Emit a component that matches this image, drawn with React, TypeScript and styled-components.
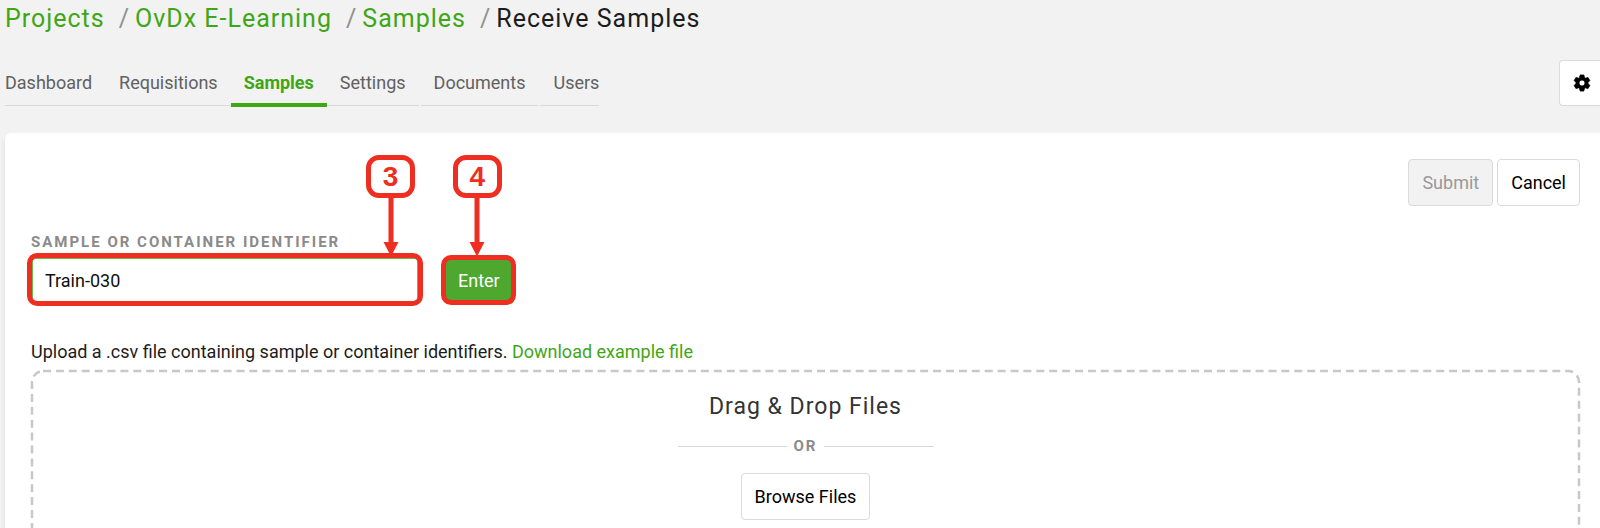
import React, { useState } from "react";
import styled, { createGlobalStyle } from "styled-components";
import { MdSettings } from "react-icons/md";

const green = "#3fa615";
const red = "#ee2e20";

const GlobalStyle = createGlobalStyle`
  *, *::before, *::after { box-sizing: border-box; }
  body {
    margin: 0;
    background: #f2f2f2;
    color: #1c1c1c;
    font-family: Roboto, "Liberation Sans", sans-serif;
    font-size: 18px;
    line-height: 24px;
  }
  button, input { font: inherit; }
  a { color: ${green}; text-decoration: none; }
`;

const Page = styled.div`
  display: flex;
  flex-direction: column;
  height: 100vh;
  overflow: hidden;
  padding-left: 5px;
`;

const Breadcrumb = styled.nav`
  display: flex;
  font-size: 25px;
  line-height: 38px;
  letter-spacing: 1px;
  white-space: nowrap;
`;

const Separator = styled.span`
  color: #909090;
  margin: 0 5px 0 14px;
`;

const HeaderRow = styled.div`
  display: flex;
  align-items: flex-start;
  justify-content: space-between;
  margin: 22px 0 26px;
`;

const Tabs = styled.nav`
  display: flex;
  padding-top: 11px;
`;

const Tab = styled.a<{ $active?: boolean; $spaced?: boolean }>`
  height: 35px;
  padding: 0 13px;
  margin-left: ${(p) => (p.$spaced ? 2 : 0)}px;
  color: ${(p) => (p.$active ? green : "#616161")};
  font-weight: ${(p) => (p.$active ? 700 : 400)};
  border-bottom: 1px solid #d9d9d9;
  ${(p) => p.$active && `height: 36px; border-bottom: 4px solid ${green};`}
  &:first-child { padding: 0 14px 0 0; }
  &:last-child { padding-right: 0; }
`;

const Button = styled.button<{ $primary?: boolean }>`
  height: 47px;
  padding: 0 13px;
  border: 1px solid ${(p) => (p.$primary ? "#4ea72e" : "#dadada")};
  border-radius: 4px;
  background: ${(p) => (p.$primary ? "#4ea72e" : "#fff")};
  color: ${(p) => (p.$primary ? "#fff" : "#000")};
  &:disabled {
    background: #f2f2f2;
    color: #999;
  }
`;

const SettingsButton = styled(Button)`
  display: flex;
  align-items: center;
  width: 41px;
  height: 46px;
  padding: 0 0 0 12px;
  border-right: 0;
  border-radius: 4px 0 0 4px;
  svg {
    flex: none;
  }
  path:last-child {
    stroke: currentColor;
    stroke-width: 1px;
  }
`;

const Panel = styled.main`
  flex: 1;
  display: flex;
  flex-direction: column;
  padding: 26px 20px 0 26px;
  background: #fff;
  border-radius: 6px 0 0 0;
  box-shadow: 0 4px 4px rgba(0, 0, 0, 0.1);
`;

const Actions = styled.div`
  display: flex;
  justify-content: flex-end;
  gap: 4px;
`;

const Label = styled.label`
  display: block;
  margin-top: 24px;
  color: #8a8a8a;
  font-size: 15px;
  font-weight: 700;
  letter-spacing: 2px;
`;

const EntryRow = styled.form`
  display: flex;
  align-items: flex-start;
  gap: 25px;
  margin: 3px 0 36px;
`;

const Marked = styled.div<{ $inset: string }>`
  position: relative;
  display: flex;
  &::after {
    content: "";
    position: absolute;
    inset: ${(p) => p.$inset};
    border: 5px solid ${red};
    border-radius: 10px;
    pointer-events: none;
  }
`;

const Callout = styled.div<{ $right: number }>`
  position: absolute;
  right: ${(p) => p.$right}px;
  bottom: 100%;
  display: flex;
  flex-direction: column;
  align-items: center;
  color: ${red};
  pointer-events: none;
  svg { display: block; }
`;

const CalloutNumber = styled.span`
  display: flex;
  align-items: center;
  justify-content: center;
  width: 49px;
  height: 43px;
  border: 5px solid ${red};
  border-radius: 13px;
  background: #fff;
  font: 700 28px/28px "Liberation Sans", sans-serif;
`;

const TextInput = styled.input`
  width: 388px;
  height: 46px;
  padding: 0 12px;
  border: 2px solid #6db84d;
  border-radius: 4px;
  background: #fff;
  color: #111;
  outline: 0;
`;

const UploadHint = styled.p`
  margin: 0 0 6px;
`;

const DropZone = styled.section`
  position: relative;
  flex: 1;
  display: flex;
  flex-direction: column;
  align-items: center;
  padding-top: 20px;
`;

const DashedOutline = styled.svg`
  position: absolute;
  top: 0;
  left: 0;
  width: 100%;
  height: calc(100% + 26px);
  overflow: visible;
  pointer-events: none;
  rect { width: calc(100% - 2px); }
`;

const DropTitle = styled.h2`
  margin: 0 0 10px;
  color: #333;
  font-size: 23px;
  font-weight: 400;
  line-height: 34px;
  letter-spacing: 1px;
`;

const Divider = styled.div`
  display: flex;
  align-items: center;
  gap: 7px;
  width: 256px;
  margin-bottom: 15px;
  color: #8a8a8a;
  font-size: 15px;
  font-weight: 700;
  letter-spacing: 2px;
  &::before, &::after {
    content: "";
    flex: 1;
    height: 1px;
    background: #d6d6d6;
  }
`;

const crumbs = ["Projects", "OvDx E-Learning", "Samples"];
const tabs = [
  { name: "Dashboard" },
  { name: "Requisitions" },
  { name: "Samples", active: true },
  { name: "Settings" },
  { name: "Documents", spaced: true },
  { name: "Users", spaced: true },
];

function Marker({ step, right }: { step: number; right: number }) {
  return (
    <Callout $right={right}>
      <CalloutNumber>{step}</CalloutNumber>
      <svg width="16" height="59" viewBox="0 0 16 59" fill={red} aria-hidden="true">
        <path d="M5.5 0h5v44H15.5L8 58.5.5 44h5z" />
      </svg>
    </Callout>
  );
}

export default function App() {
  const [identifier, setIdentifier] = useState("Train-030");
  return (
    <Page>
      <GlobalStyle />
      <Breadcrumb aria-label="Breadcrumb">
        {crumbs.map((name) => (
          <React.Fragment key={name}>
            <a href="#">{name}</a>
            <Separator>/</Separator>
          </React.Fragment>
        ))}
        <span>Receive Samples</span>
      </Breadcrumb>
      <HeaderRow>
        <Tabs aria-label="Project">
          {tabs.map((t) => (
            <Tab key={t.name} href="#" $active={t.active} $spaced={t.spaced}>
              {t.name}
            </Tab>
          ))}
        </Tabs>
        <SettingsButton aria-label="Project settings">
          <MdSettings size={20} />
        </SettingsButton>
      </HeaderRow>
      <Panel>
        <Actions>
          <Button disabled>Submit</Button>
          <Button>Cancel</Button>
        </Actions>
        <Label htmlFor="identifier">SAMPLE OR CONTAINER IDENTIFIER</Label>
        <EntryRow onSubmit={(e) => e.preventDefault()}>
          <Marked $inset="-4px -4px -3px">
            <TextInput
              id="identifier"
              value={identifier}
              onChange={(e) => setIdentifier(e.target.value)}
            />
            <Marker step={3} right={4} />
          </Marked>
          <Marked $inset="-2px -2px -1px -3px">
            <Button $primary type="submit">Enter</Button>
            <Marker step={4} right={12} />
          </Marked>
        </EntryRow>
        <UploadHint>
          Upload a .csv file containing sample or container identifiers.{" "}
          <a href="#">Download example file</a>
        </UploadHint>
        <DropZone>
          <DashedOutline aria-hidden="true">
            <rect
              x="1"
              y="1"
              height="100%"
              rx="11"
              fill="none"
              stroke="#c8c8c8"
              strokeWidth="2.5"
              strokeDasharray="8 4.9"
            />
          </DashedOutline>
          <DropTitle>Drag &amp; Drop Files</DropTitle>
          <Divider>OR</Divider>
          <Button>Browse Files</Button>
        </DropZone>
      </Panel>
    </Page>
  );
}
